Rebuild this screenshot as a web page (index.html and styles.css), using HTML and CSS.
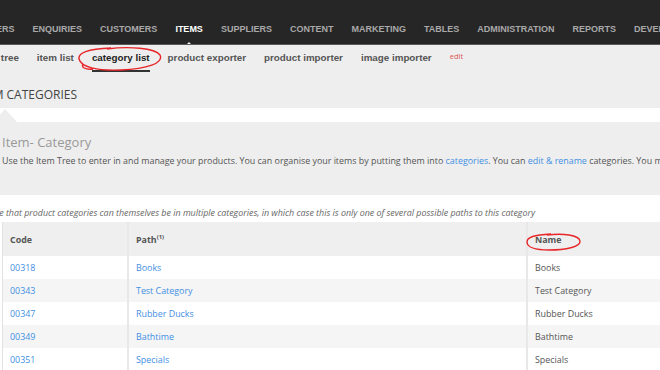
FILE: index.html
```html
<!DOCTYPE html>
<html lang="en">
  <head>
    <meta charset="UTF-8" />
    <meta name="viewport" content="width=device-width, initial-scale=1.0" />
    <title>Item Categories</title>
    <link rel="stylesheet" href="styles.css">
  </head>
  <body>
    <div class="topnav">
      <div class="topnav-links">
        <a href="#" class="topnav-link">ORDERS</a>
        <a href="#" class="topnav-link">ENQUIRIES</a>
        <a href="#" class="topnav-link">CUSTOMERS</a>
        <a href="#" class="topnav-link active">ITEMS</a>
        <a href="#" class="topnav-link">SUPPLIERS</a>
        <a href="#" class="topnav-link">CONTENT</a>
        <a href="#" class="topnav-link">MARKETING</a>
        <a href="#" class="topnav-link">TABLES</a>
        <a href="#" class="topnav-link">ADMINISTRATION</a>
        <a href="#" class="topnav-link">REPORTS</a>
        <a href="#" class="topnav-link">DEVELOPER</a>
      </div>
    </div>

    <div class="subnav">
      <a href="#" class="subnav-link">item tree</a>
      <a href="#" class="subnav-link">item list</a>
      <a href="#" class="subnav-link active">category list</a>
      <a href="#" class="subnav-link">product exporter</a>
      <a href="#" class="subnav-link">product importer</a>
      <a href="#" class="subnav-link">image importer</a>
      <a href="#" class="subnav-edit">edit</a>
      <!-- hand-drawn marker around the current tab -->
      <svg class="mark mark-tab" width="86" height="26" viewBox="0 0 86 26">
        <path d="M30 3 C52 0 78 2 83 9 C87 17 70 23 44 24 C20 25 4 21 2 13 C1 7 10 3 34 2 M6 18 C4 21 8 24 16 23" fill="none" stroke="#e8262a" stroke-width="1.4"/>
      </svg>
    </div>

    <div class="page-head">
      <h1>Item Categories</h1>
    </div>

    <div class="intro">
      <h2>Item- Category</h2>
      <p>Use the Item Tree to enter in and manage your products. You can organise your items by putting them into <a href="#">categories</a>. You can <a href="#">edit &amp; rename</a> categories. You may also re-order them.</p>
    </div>

    <div class="content">
      <p class="note">Note that product categories can themselves be in multiple categories, in which case this is only one of several possible paths to this category</p>

      <table class="cat-table">
        <thead>
          <tr>
            <th class="col-code">Code</th>
            <th class="col-path">Path<sup>(1)</sup></th>
            <th class="col-name">
              Name
              <svg class="mark mark-name" width="58" height="20" viewBox="0 0 58 20">
                <path d="M22 3 C38 1 54 3 55 9 C56 15 40 18 24 18 C10 18 2 15 2 10 C2 5 9 3 26 2" fill="none" stroke="#e8262a" stroke-width="1.4"/>
              </svg>
            </th>
          </tr>
        </thead>
        <tbody>
          <tr><td><a href="#">00318</a></td><td><a href="#">Books</a></td><td>Books</td></tr>
          <tr><td><a href="#">00343</a></td><td><a href="#">Test Category</a></td><td>Test Category</td></tr>
          <tr><td><a href="#">00347</a></td><td><a href="#">Rubber Ducks</a></td><td>Rubber Ducks</td></tr>
          <tr><td><a href="#">00349</a></td><td><a href="#">Bathtime</a></td><td>Bathtime</td></tr>
          <tr><td><a href="#">00351</a></td><td><a href="#">Specials</a></td><td>Specials</td></tr>
        </tbody>
      </table>
    </div>
  </body>
</html>
```

FILE: styles.css
```css
body {
  font-family: "Open Sans", Arial, sans-serif;
  margin: 0;
  padding: 0;
  background-color: #fff;
  color: #555;
  overflow: hidden;
}
a {
  text-decoration: none;
}
.topnav {
  background-color: #262626;
  height: 44px;
  border-bottom: 1px solid #5a5a5a;
  overflow: hidden;
}
.topnav-links {
  display: flex;
  gap: 18px;
  margin-left: -24px;
  height: 100%;
  align-items: center;
  padding-top: 13px;
  box-sizing: border-box;
}
.topnav-link {
  position: relative;
  color: #a9a9a9;
  font-family: "Liberation Sans", Arial, sans-serif;
  font-weight: bold;
  font-size: 9px;
  white-space: nowrap;
}
.topnav-link.active {
  color: #fff;
}
.topnav-link.active::after {
  content: "";
  position: absolute;
  left: 50%;
  margin-left: -5px;
  top: 18px;
  border: 5px solid transparent;
  border-bottom-color: #eee;
  border-top: 0;
}
.subnav {
  position: relative;
  background-color: #eee;
  display: flex;
  align-items: flex-start;
  gap: 18px;
  height: 28px;
  padding-top: 7px;
  box-sizing: border-box;
  margin-left: -22px;
}
.subnav-link {
  color: #555;
  font-family: "Liberation Sans", Arial, sans-serif;
  font-weight: bold;
  font-size: 9.8px;
  white-space: nowrap;
}
.subnav-link.active {
  color: #222;
  position: relative;
}
.subnav-link.active::after {
  content: "";
  position: absolute;
  left: 0;
  right: 0;
  top: 18px;
  height: 2px;
  background-color: #333;
}
.subnav-edit {
  color: #d9534f;
  font-size: 7.5px;
  margin-top: -1px;
}
.mark {
  position: absolute;
  pointer-events: none;
}
.mark-tab {
  left: 99px;
  top: 1px;
}
.page-head {
  background-color: #eee;
  height: 35px;
  padding-top: 10px;
  box-sizing: border-box;
}
.page-head h1 {
  margin: 0 0 0 -24px;
  font-size: 12px;
  font-weight: normal;
  text-transform: uppercase;
  color: #444;
  line-height: 24px;
}
.intro {
  position: relative;
  background-color: #eee;
  margin-top: 14px;
  height: 73px;
  padding: 10px 0 0 2px;
  box-sizing: border-box;
}
.intro::before {
  content: "";
  position: absolute;
  left: -7px;
  top: -13px;
  border: 12px solid transparent;
  border-bottom: 13px solid #eee;
  border-top: 0;
}
.intro h2 {
  margin: 0;
  font-size: 13px;
  font-weight: normal;
  color: #999;
  line-height: 20px;
}
.intro p {
  margin: 0;
  font-size: 8.9px;
  line-height: 18px;
  color: #555;
  white-space: nowrap;
}
.intro a {
  color: #3f8fe3;
}
.note {
  margin: 0 0 0 -15px;
  padding-top: 10px;
  font-size: 8.9px;
  font-style: italic;
  color: #666;
  line-height: 16px;
  height: 27px;
  box-sizing: border-box;
  white-space: nowrap;
}
.cat-table {
  border-collapse: collapse;
  margin-left: 2px;
  width: 700px;
  border-left: 1px solid #e2e2e2;
  font-size: 8.9px;
}
.cat-table th {
  background-color: #efefef;
  height: 34px;
  padding: 0 0 0 7px;
  text-align: left;
  font-weight: bold;
  color: #555;
}
.cat-table th sup {
  font-size: 6px;
}
.cat-table td {
  height: 23px;
  padding: 0 0 0 7px;
  color: #555;
}
.cat-table th + th,
.cat-table td + td {
  border-left: 2px solid #e8e8e8;
}
.cat-table tbody tr:nth-child(even) td {
  background-color: #f5f5f5;
}
.cat-table td a {
  color: #3f8fe3;
}
.col-code {
  width: 117px;
}
.col-path {
  width: 390px;
}
.col-name {
  position: relative;
}
.mark-name {
  left: -3px;
  top: 10px;
}
```
